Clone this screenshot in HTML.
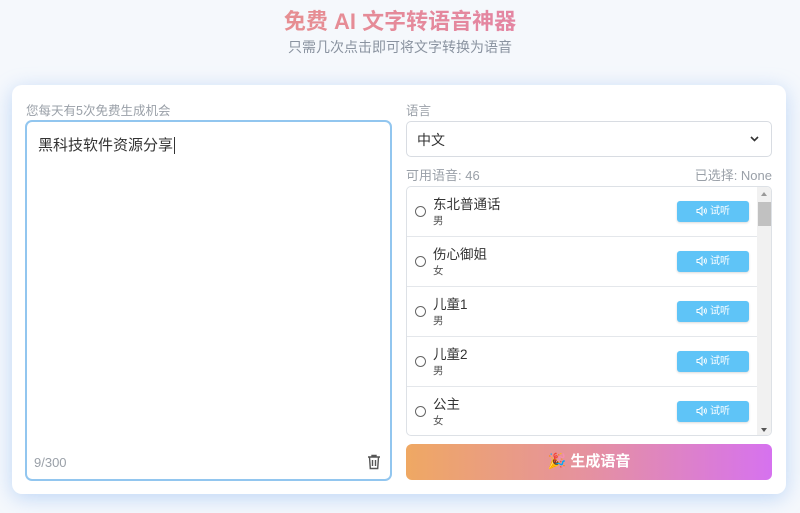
<!DOCTYPE html>
<html><head><meta charset="utf-8"><style>
*{box-sizing:border-box;margin:0;padding:0}
body{width:800px;height:513px;overflow:hidden;background:#f5f8fc;font-family:"Liberation Sans","Noto Sans CJK SC",sans-serif;position:relative}
.t{position:absolute;left:0;width:800px;text-align:center;top:4px;font-size:22px;font-weight:bold;background:linear-gradient(90deg,#ea9a7c,#e07ab8);-webkit-background-clip:text;color:transparent}
.t span{display:inline-block}
.s{position:absolute;left:0;width:800px;text-align:center;top:37px;font-size:14px;color:#8a93a0}
.card{position:absolute;left:12px;top:85px;width:774px;height:409px;background:#fff;border-radius:10px;box-shadow:0 4px 20px rgba(110,165,240,.4)}
.lbl{position:absolute;font-size:12.5px;color:#9aa0a8}
.ta{position:absolute;left:25px;top:120px;width:367px;height:361px;border:2px solid #92c6ef;border-radius:7px;background:#fff}
.ta .txt{position:absolute;left:11px;top:12px;font-size:15px;color:#333}
.ta .cnt{position:absolute;left:7px;bottom:9px;font-size:13px;color:#9aa0a8}
.sel{position:absolute;left:406px;top:121px;width:366px;height:36px;border:1px solid #d8dce2;border-radius:5px;font-size:14px;color:#333;padding:8px 10px}
.list{position:absolute;left:406px;top:186px;width:366px;height:250px;border:1px solid #dde1e6;border-radius:5px;overflow:hidden}
.row{position:absolute;left:0;width:350px;height:50px;border-bottom:1px solid #e4e7eb}
.row .r{position:absolute;left:8px;top:19px;width:11px;height:11px;border:1px solid #666;border-radius:50%}
.row .n{position:absolute;left:26px;top:6px;font-size:13.5px;color:#333}
.row .g{position:absolute;left:26px;top:26px;font-size:10.5px;color:#555}
.row .b{position:absolute;left:270px;top:14px;width:72px;height:21px;background:#5fc4f7;border-radius:3px;color:#fff;font-size:10px;text-align:center;line-height:21px;box-shadow:0 1px 2px rgba(0,0,0,.15)}
.row .b svg{vertical-align:-2px;margin-right:3px}
.sb{position:absolute;left:350px;top:0;width:15px;height:250px;background:#f1f1f1}
.gen{position:absolute;left:406px;top:444px;width:366px;height:36px;border-radius:6px;background:linear-gradient(90deg,#efa863,#e591a0 50%,#d672ef);color:#fff;font-weight:bold;font-size:15px;text-align:center;line-height:36px}
</style></head><body>
<div class="t">免费 AI 文字转语音神器</div>
<div class="s">只需几次点击即可将文字转换为语音</div>
<div class="card"></div>
<div class="lbl" style="left:26px;top:100px">您每天有5次免费生成机会</div>
<div class="ta"><div class="txt">黑科技软件资源分享<span style="border-left:1px solid #333;margin-left:1px"></span></div><div class="cnt">9/300</div>
<svg style="position:absolute;right:9px;bottom:9px" width="14" height="16" viewBox="0 0 14 16" fill="none" stroke="#555" stroke-width="1.4"><path d="M1 3h12M5 3V1.5h4V3M2.5 3l.8 11.5h7.4L11.5 3M5.5 6v6M8.5 6v6"/></svg></div>
<div class="lbl" style="left:406px;top:100px">语言</div>
<div class="sel">中文<svg style="position:absolute;right:12px;top:14px" width="9" height="6" viewBox="0 0 9 6"><path d="M1 1l3.5 3.5L8 1" stroke="#333" stroke-width="1.6" fill="none"/></svg></div>
<div class="lbl" style="left:406px;top:165px;font-size:13px">可用语音: 46</div>
<div class="lbl" style="right:28px;top:165px;font-size:13px">已选择: None</div>
<div class="list">
<div class="row" style="top:0"><div class="r"></div><div class="n">东北普通话</div><div class="g">男</div><div class="b"><svg width="11" height="10" viewBox="0 0 11 10" fill="none" stroke="#fff" stroke-width="1"><path d="M1 3.5h2L6 1v8L3 6.5H1zM8 3q1 2 0 4M9.5 2q1.7 3 0 6"/></svg>试听</div></div>
<div class="row" style="top:50px"><div class="r"></div><div class="n">伤心御姐</div><div class="g">女</div><div class="b"><svg width="11" height="10" viewBox="0 0 11 10" fill="none" stroke="#fff" stroke-width="1"><path d="M1 3.5h2L6 1v8L3 6.5H1zM8 3q1 2 0 4M9.5 2q1.7 3 0 6"/></svg>试听</div></div>
<div class="row" style="top:100px"><div class="r"></div><div class="n">儿童1</div><div class="g">男</div><div class="b"><svg width="11" height="10" viewBox="0 0 11 10" fill="none" stroke="#fff" stroke-width="1"><path d="M1 3.5h2L6 1v8L3 6.5H1zM8 3q1 2 0 4M9.5 2q1.7 3 0 6"/></svg>试听</div></div>
<div class="row" style="top:150px"><div class="r"></div><div class="n">儿童2</div><div class="g">男</div><div class="b"><svg width="11" height="10" viewBox="0 0 11 10" fill="none" stroke="#fff" stroke-width="1"><path d="M1 3.5h2L6 1v8L3 6.5H1zM8 3q1 2 0 4M9.5 2q1.7 3 0 6"/></svg>试听</div></div>
<div class="row" style="top:200px;border:none"><div class="r"></div><div class="n">公主</div><div class="g">女</div><div class="b"><svg width="11" height="10" viewBox="0 0 11 10" fill="none" stroke="#fff" stroke-width="1"><path d="M1 3.5h2L6 1v8L3 6.5H1zM8 3q1 2 0 4M9.5 2q1.7 3 0 6"/></svg>试听</div></div>
<div class="sb"><div style="position:absolute;left:4px;top:5px;border:3px solid transparent;border-bottom:4px solid #999;border-top:0"></div><div style="position:absolute;left:1px;top:15px;width:13px;height:24px;background:#c1c1c1"></div><div style="position:absolute;left:4px;bottom:5px;border:3px solid transparent;border-top:4px solid #555;border-bottom:0"></div></div>
</div>
<div class="gen">🎉 生成语音</div>
</body></html>
